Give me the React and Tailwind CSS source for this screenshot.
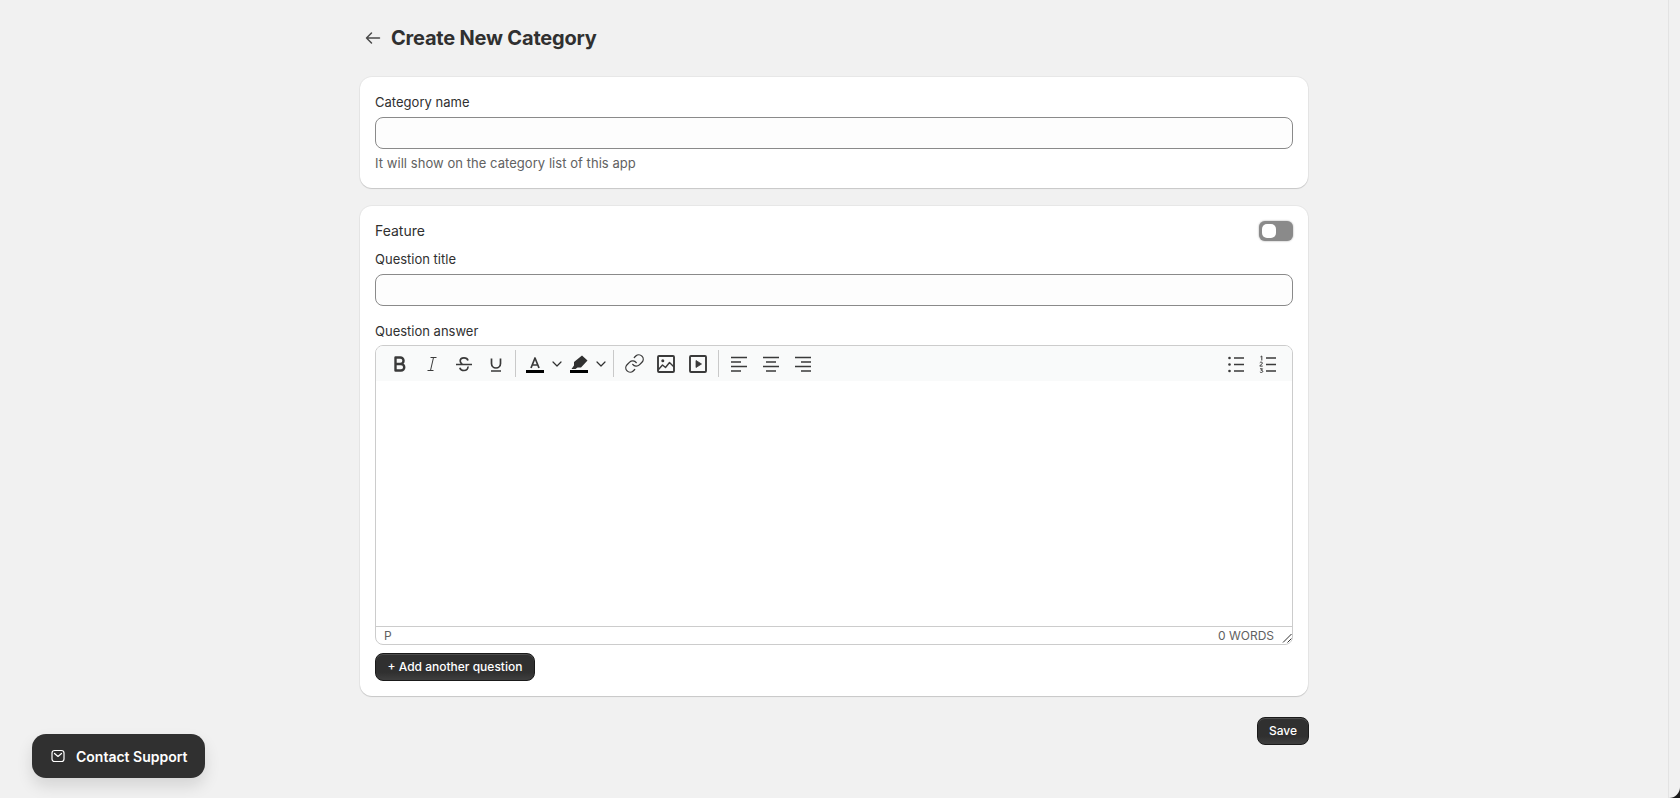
import { ChevronDown, Link } from 'lucide-react';

function Btn({ children, className = '' }) {
  return (
    <button className={`inline-flex items-center justify-center h-[28px] rounded-lg border border-[#1a1a1a] bg-gradient-to-b from-[#303030] from-70% to-[#3f3f3f] shadow-[inset_0_1px_0_rgba(255,255,255,0.14)] text-white text-[12px] leading-none font-medium ${className}`}>
      {children}
    </button>
  );
}

function Svg({ children }) {
  return (
    <svg width="20" height="20" viewBox="0 0 20 20" fill="none" stroke="#3a3a3a" strokeWidth="1.7" strokeLinecap="butt" strokeLinejoin="round">
      {children}
    </svg>
  );
}

function ToolBtn({ children }) {
  return <span className="w-[32px] h-[35px] flex items-center justify-center">{children}</span>;
}

function Sep({ className = '' }) {
  return <span className={`w-px h-[27px] bg-[#c9c9c9] ${className}`} />;
}

function ColorBtn({ children }) {
  return (
    <div className="flex items-center">
      <span className="w-[26px] h-[35px] flex items-center justify-center">{children}</span>
      <span className="w-[18px] flex justify-center">
        <ChevronDown className="w-[16px] h-[16px] text-[#303030]" strokeWidth={1.8} />
      </span>
    </div>
  );
}

function Toolbar() {
  return (
    <div className="h-[35px] bg-[#f9fafa] flex items-center justify-between pl-[8px] pr-[8px]">
      <div className="flex items-center">
        <ToolBtn>
          <Svg><path strokeWidth="2.4" d="M5.500 3.500h4.800a3.200 3.200 0 0 1 0 6.500H5.500zM5.500 10h5.500a3.250 3.250 0 0 1 0 6.500H5.500z" /></Svg>
        </ToolBtn>
        <ToolBtn>
          <Svg><path strokeWidth="1" d="M8.500 3.500h6M5.500 16.500h6M11.500 3.500l-3 13" /></Svg>
        </ToolBtn>
        <ToolBtn>
          <Svg><path d="M2 10.500h16M14 6.500C13.500 4.700 11.800 3.800 10 3.800 8 3.800 6.200 4.800 6.200 7c0 1.200.6 2.300 2 3M13.900 12.500c.5 2.500-1.500 4-3.900 4-2 0-3.700-1-4.200-2.800" /></Svg>
        </ToolBtn>
        <ToolBtn>
          <Svg><path d="M5.500 4.500v5a4.500 4.500 0 0 0 9 0v-5M5 17h10" /></Svg>
        </ToolBtn>
        <Sep className="ml-[3px] mr-[6px]" />
        <ColorBtn>
          <svg width="20" height="20" viewBox="0 0 20 20" fill="none">
            <path d="M6 14 10 4l4 10M7.300 11h5.400" stroke="#3a3a3a" strokeWidth="1.700" strokeLinejoin="round" />
            <rect x="1" y="16" width="18" height="3" fill="#000" />
          </svg>
        </ColorBtn>
        <ColorBtn>
          <svg width="20" height="20" viewBox="0 0 20 20">
            <path d="M13 1.500 18.500 6.500 12 13.500H8.500L6.500 15 2.500 15 5 11.500V8z" fill="#303030" />
            <rect x="1" y="16" width="18" height="3" fill="#000" />
          </svg>
        </ColorBtn>
        <Sep className="ml-[3px] mr-[4px]" />
        <ToolBtn>
          <Link className="w-[21px] h-[21px] text-[#3a3a3a]" strokeWidth={1.5} />
        </ToolBtn>
        <ToolBtn>
          <Svg>
            <rect x="2" y="2" width="16" height="16" rx="1" strokeWidth="1.900" />
            <circle cx="6.800" cy="6.800" r="1.500" fill="#3a3a3a" stroke="none" />
            <path d="M2.500 15.500 6.500 11l3 2.500 4-5 4.500 4.500" strokeWidth="1.400" />
          </Svg>
        </ToolBtn>
        <ToolBtn>
          <Svg>
            <rect x="2" y="2" width="16" height="16" rx="1" strokeWidth="1.900" />
            <path d="M8 6.500v7l5.500-3.500z" fill="#3a3a3a" stroke="#3a3a3a" strokeWidth="0.800" />
          </Svg>
        </ToolBtn>
        <Sep className="ml-[4px] mr-[4px]" />
        <ToolBtn>
          <Svg><path d="M2 3.500h16M2 8h10M2 12.500h16M2 17h10" /></Svg>
        </ToolBtn>
        <ToolBtn>
          <Svg><path d="M2 3.500h16M5 8h10M2 12.500h16M5 17h10" /></Svg>
        </ToolBtn>
        <ToolBtn>
          <Svg><path d="M2 3.500h16M8 8h10M2 12.500h16M8 17h10" /></Svg>
        </ToolBtn>
      </div>
      <div className="flex items-center">
        <ToolBtn>
          <Svg>
            <path strokeWidth="1.700" d="M8 4h10M8 10.500h10M8 17h10" />
            <circle cx="3.500" cy="4" r="1.300" fill="#3a3a3a" stroke="none" />
            <circle cx="3.500" cy="10.500" r="1.300" fill="#3a3a3a" stroke="none" />
            <circle cx="3.500" cy="17" r="1.300" fill="#3a3a3a" stroke="none" />
          </Svg>
        </ToolBtn>
        <ToolBtn>
          <Svg>
            <path strokeWidth="1.700" d="M8 4h10M8 10.500h10M8 17h10" />
            <path strokeWidth="1" d="M2.500 2.800l1.300-.8v4.500M1.800 8.800c.4-1 2.700-.9 2.700.3 0 1-2.700 1.800-2.700 3h2.900M2 14.800h2.500l-1.300 1.500c1.300 0 1.600.6 1.600 1.100 0 1.300-2.300 1.300-2.900.5" />
          </Svg>
        </ToolBtn>
      </div>
    </div>
  );
}

function Editor() {
  return (
    <div className="mt-[4px] h-[300px] border border-[#cccccc] rounded-lg overflow-hidden bg-white">
      <Toolbar />
      <div className="h-[246px] bg-white border-b border-[#cccccc]" />
      <div className="h-[17px] flex items-center justify-between pl-[8px] text-[12px] text-[#616161] leading-none">
        <span>P</span>
        <div className="flex items-center">
          <span>0 WORDS</span>
          <svg className="ml-[8px] mt-[5px]" width="10" height="10" viewBox="0 0 10 10" stroke="#303030" strokeWidth="1">
            <path d="M1 9.500 9.500 1M5.500 9.500 9.500 5.500" />
          </svg>
        </div>
      </div>
    </div>
  );
}

function TextInput() {
  return <div className="h-[32px] rounded-lg border border-[#8a8a8a] bg-[#fdfdfd]" />;
}

function Card({ children, className = '' }) {
  return (
    <div className={`bg-white rounded-xl shadow-[0_1px_1px_rgba(0,0,0,0.14),0_0_0_1px_rgba(0,0,0,0.04)] p-[15px] ${className}`}>
      {children}
    </div>
  );
}

export default function App() {
  return (
    <div className="h-[798px] overflow-hidden bg-[#f1f1f1] flex font-['Inter',sans-serif] text-[#303030] relative">
      <div className="flex-1 min-w-0 pl-[360px]">
        <div className="w-[948px]">
          <div className="h-[77px] flex items-center pb-[2px]">
            <svg className="ml-[3px]" width="20" height="20" viewBox="0 0 20 20" fill="none" stroke="#4a4a4a" strokeWidth="1.500" strokeLinecap="round" strokeLinejoin="round">
              <path d="M3.500 10h13M8.500 5l-5 5 5 5" />
            </svg>
            <h1 className="ml-[8px] text-[20px] leading-[24px] font-bold tracking-[-0.2px]">Create New Category</h1>
          </div>

          <Card className="h-[111px]">
            <div className="text-[13px] leading-[20px] tracking-[0.02px]">Category name</div>
            <div className="mt-[5px]"><TextInput /></div>
            <div className="mt-[4px] text-[13px] leading-[20px] text-[#616161] tracking-[0.05px]">It will show on the category list of this app</div>
          </Card>

          <Card className="mt-[18px] h-[490px]">
            <div className="flex items-center justify-between h-[20px]">
              <span className="text-[14px] pb-[2px]">Feature</span>
              <span className="w-[34px] h-[20px] rounded-md bg-[#8a8a8a] shadow-[0_0_2px_rgba(0,0,0,0.4)] flex items-center pl-[3px]">
                <span className="w-[14px] h-[14px] rounded-[5px] bg-white" />
              </span>
            </div>
            <div className="mt-[8px] text-[13px] leading-[20px]">Question title</div>
            <div className="mt-[5px]"><TextInput /></div>
            <div className="mt-[15px] text-[13px] leading-[20px]">Question answer</div>
            <Editor />
            <Btn className="mt-[8px] w-[160px]">+ Add another question</Btn>
          </Card>

          <div className="flex justify-end mt-[21px] -mr-px">
            <Btn className="w-[52px]">Save</Btn>
          </div>
        </div>
      </div>

      <div className="w-[12px] shrink-0 border-l border-[#e3e3e3] relative">
        <span className="absolute right-0 bottom-0 w-[11px] h-[11px] bg-[#1a1a1a]">
          <span className="block w-full h-full bg-[#f1f1f1] rounded-br-[11px]" />
        </span>
      </div>

      <button className="absolute left-[32px] bottom-[20px] w-[173px] h-[44px] rounded-[14px] bg-[#303030] text-white text-[14px] font-semibold flex items-center pl-[19px] gap-[11px] shadow-[0_8px_16px_rgba(0,0,0,0.12)]">
        <svg width="14" height="14" viewBox="0 0 14 14" fill="none" stroke="#fff" strokeWidth="1.200" strokeLinecap="round" strokeLinejoin="round">
          <rect x="1" y="1.500" width="12" height="11" rx="2.500" />
          <path d="M3.500 4.500 7 7.500 10.500 4.500" />
        </svg>
        Contact Support
      </button>
    </div>
  );
}
